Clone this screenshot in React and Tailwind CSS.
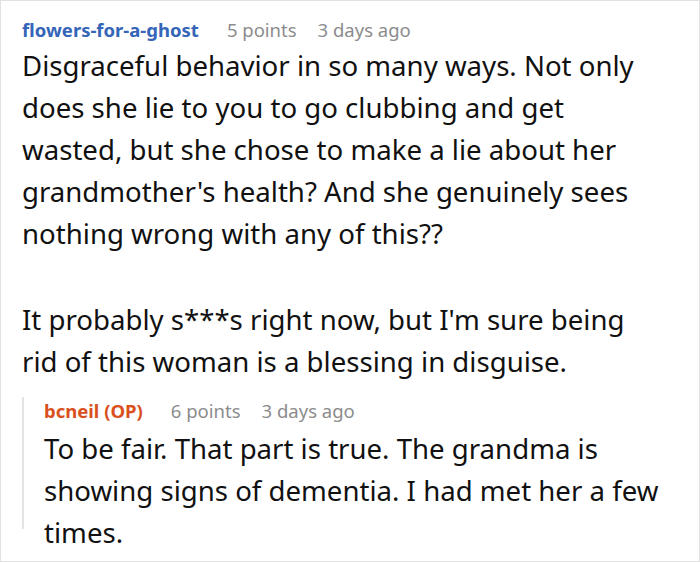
import React from "react";

const font = { fontFamily: '"Noto Sans", "Open Sans", sans-serif' };

function Meta({ name, nameClass, points, time }) {
  return (
    <div className="flex items-baseline text-[18.5px] leading-[28px]">
      <span className={`font-bold ${nameClass}`}>{name}</span>
      <span className="text-[#8c8c8c] ml-[28px]">{points}</span>
      <span className="text-[#8c8c8c] ml-[21px]">{time}</span>
    </div>
  );
}

export default function App() {
  return (
    <div style={font} className="w-[700px] h-[562px] overflow-hidden bg-white">
      <div className="h-full border border-[#e2e2e2] pl-[21px] pt-[15px]">
        <Meta
          name="flowers-for-a-ghost"
          nameClass="text-[#3465b8]"
          points="5 points"
          time="3 days ago"
        />
        <div className="w-[620px] text-[27.6px] leading-[42px] text-[#111]">
          <p>
            Disgraceful behavior in so many ways. Not only does she lie to you to go clubbing and get
            wasted, but she chose to make a lie about her grandmother's health? And she genuinely sees
            nothing wrong with any of this??
          </p>
          <p className="mt-[44px]">
            It probably s***s right now, but I'm sure being rid of this woman is a blessing in disguise.
          </p>
        </div>
        <div className="mt-[28px] h-[132px] border-l-2 border-[#e4e4e4] pl-[20px]">
          <div className="-mt-[13px] w-[636px]">
            <Meta
              name="bcneil (OP)"
              nameClass="text-[#d9501e]"
              points="6 points"
              time="3 days ago"
            />
            <p className="mt-[2px] text-[27.6px] leading-[42px] text-[#111]">
              To be fair. That part is true. The grandma is showing signs of dementia. I had met her a
              few times.
            </p>
          </div>
        </div>
      </div>
    </div>
  );
}
